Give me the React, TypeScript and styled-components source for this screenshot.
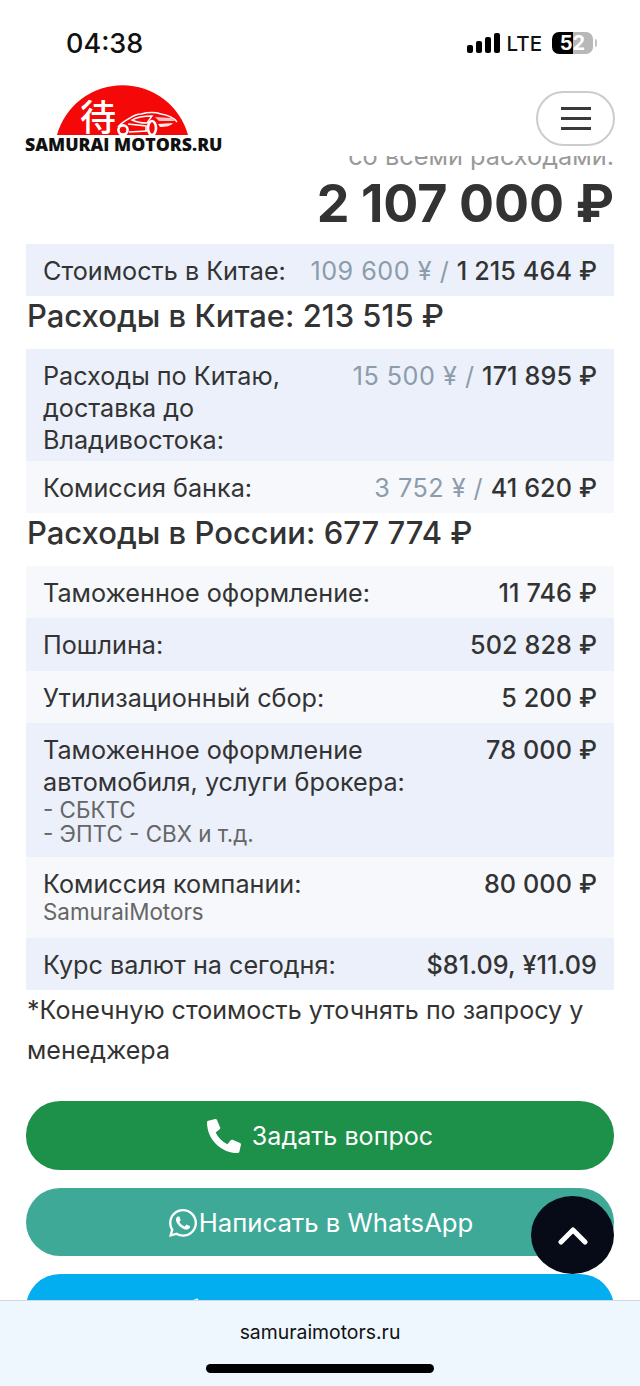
import React from 'react'
import styled, { createGlobalStyle } from 'styled-components'
import { FaPhoneAlt, FaTelegramPlane, FaWhatsapp } from 'react-icons/fa'

const GlobalStyle = createGlobalStyle`
	html, body {
		margin: 0;
		padding: 0;
		background: #fff;
	}
	* {
		box-sizing: border-box;
	}
`

function App() {
	return (
		<Page>
			<GlobalStyle />
			<StatusBar>
				<Time>04:38</Time>
				<StatusIcons>
					<Signal>
						<Bar level={1} />
						<Bar level={2} />
						<Bar level={3} />
						<Bar level={4} />
					</Signal>
					<Lte>LTE</Lte>
					<Battery>
						<BatteryFill>52</BatteryFill>
					</Battery>
				</StatusIcons>
			</StatusBar>
			<Header>
				<Logo>
					<svg width="198" height="50" viewBox="0 0 198 50">
						<path d="M32 50 A68 68 0 0 1 163 50 Z" fill="#f40808" />
						{/* car */}
						<path d="M93 42 C96 38 100 36 105 33 C108 31 111 29 116 29 C124 27 130 27 136 29 C143 30 149 33 152 37" fill="none" stroke="#fff" strokeWidth="1.5" />
						<path d="M107 35 C112 32 119 31 127 31 L122 38 C116 38 111 37 107 35 Z" fill="none" stroke="#fff" strokeWidth="1.4" />
						<path d="M130 32 L146 33 L150 36 L134 36 Z" fill="#fff" opacity="0.75" />
						<path d="M133 39 L148 38 C146 41 141 42 135 42 Z" fill="#fff" opacity="0.9" />
						<path d="M104 47 L122 46 M103 39 L121 41 L121 46" fill="none" stroke="#fff" strokeWidth="1.5" />
						<circle cx="98" cy="45" r="4.6" fill="#f40808" stroke="#fff" strokeWidth="2.6" />
						<ellipse cx="127" cy="43" rx="4" ry="7" fill="#f40808" stroke="#fff" strokeWidth="2.6" />
					</svg>
					<Kanji>待</Kanji>
					<LogoText>SAMURAI MOTORS.RU</LogoText>
				</Logo>
				<MenuButton>
					<MenuLine />
					<MenuLine />
					<MenuLine />
				</MenuButton>
			</Header>
			<Content>
				<Summary>
					<SummaryLabel>со всеми расходами:</SummaryLabel>
					<Total>2 107 000 ₽</Total>
				</Summary>
				<Table>
					<Row tone="blue">
						<Label>Стоимость в Китае:</Label>
						<Value>
							<Muted>109 600 ¥ / </Muted>1 215 464 ₽
						</Value>
					</Row>
				</Table>
				<SectionTitle>Расходы в Китае: 213 515 ₽</SectionTitle>
				<Table>
					<Row tone="blue">
						<Label>
							Расходы по Китаю,
							<br />
							доставка до
							<br />
							Владивостока:
						</Label>
						<Value>
							<Muted>15 500 ¥ / </Muted>171 895 ₽
						</Value>
					</Row>
					<Row tone="light">
						<Label>Комиссия банка:</Label>
						<Value>
							<Muted>3 752 ¥ / </Muted>41 620 ₽
						</Value>
					</Row>
				</Table>
				<SectionTitle>Расходы в России: 677 774 ₽</SectionTitle>
				<Table>
					<Row tone="light">
						<Label>Таможенное оформление:</Label>
						<Value>11 746 ₽</Value>
					</Row>
					<Row tone="blue">
						<Label>Пошлина:</Label>
						<Value>502 828 ₽</Value>
					</Row>
					<Row tone="light">
						<Label>Утилизационный сбор:</Label>
						<Value>5 200 ₽</Value>
					</Row>
					<Row tone="blue">
						<Label>
							Таможенное оформление
							<br />
							автомобиля, услуги брокера:
							<Small bottom={6}>
								- СБКТС
								<br />- ЭПТС - СВХ и т.д.
							</Small>
						</Label>
						<Value>78 000 ₽</Value>
					</Row>
					<Row tone="light">
						<Label>
							Комиссия компании:
							<Small bottom={9}>SamuraiMotors</Small>
						</Label>
						<Value>80 000 ₽</Value>
					</Row>
					<Row tone="blue">
						<Label>Курс валют на сегодня:</Label>
						<Value>$81.09, ¥11.09</Value>
					</Row>
				</Table>
				<Note>*Конечную стоимость уточнять по запросу у менеджера</Note>
				<Buttons>
					<ActionButton color="#1d9049">
						<FaPhoneAlt size={34} />
						<ButtonText gap={11} size={25.1}>Задать вопрос</ButtonText>
					</ActionButton>
					<ActionButton color="#3fa998">
						<FaWhatsapp size={32} />
						<ButtonText gap={0} size={25.7}>Написать в WhatsApp</ButtonText>
					</ActionButton>
					<ActionButton color="#03aef0">
						<FaTelegramPlane size={28} />
						<ButtonText gap={6} size={25.7}>Написать в Telegram</ButtonText>
					</ActionButton>
				</Buttons>
			</Content>
			<ScrollTop>
				<svg width="30" height="20" viewBox="0 0 30 20" fill="none">
					<path d="M3 17 L15 5 L27 17" stroke="#fff" strokeWidth="5" strokeLinecap="round" strokeLinejoin="round" />
				</svg>
			</ScrollTop>
			<BrowserBar>
				<Domain>samuraimotors.ru</Domain>
				<HomeBar />
			</BrowserBar>
		</Page>
	)
}

const Page = styled.div`
	position: relative;
	display: flex;
	flex-direction: column;
	width: 640px;
	height: 1386px;
	overflow: hidden;
	background: #fff;
	color: #333;
	font-family: Inter, 'Liberation Sans', sans-serif;
`

const StatusBar = styled.div`
	flex: none;
	display: flex;
	justify-content: space-between;
	align-items: center;
	height: 84px;
	padding: 2px 47px 0 66px;
	color: #111;
`

const Time = styled.div`
	font-size: 27px;
	font-weight: 500;
`

const StatusIcons = styled.div`
	display: flex;
	align-items: center;
`

const Signal = styled.div`
	display: flex;
	align-items: flex-end;
	gap: 3px;
	height: 20px;
`

const Bar = styled('div')<{ level: number }>`
	width: 6px;
	height: ${(props) => 5 + props.level * 4 - 1}px;
	border-radius: 2px;
	background: #000;
`

const Lte = styled.div`
	margin-left: 7px;
	font-size: 20.5px;
	font-weight: 500;
`

const Battery = styled.div`
	position: relative;
	width: 41px;
	height: 22px;
	margin-left: 10px;
	border-radius: 7px;
	background: linear-gradient(90deg, #000 52%, #b8b8b8 52%);
	&::after {
		content: '';
		position: absolute;
		right: -4px;
		top: 7px;
		width: 2px;
		height: 8px;
		border-radius: 0 2px 2px 0;
		background: #c4c4c4;
	}
`

const BatteryFill = styled.div`
	display: flex;
	justify-content: center;
	align-items: center;
	height: 100%;
	color: #fff;
	font-size: 20px;
	font-weight: 700;
`

const Header = styled.div`
	position: relative;
	z-index: 1;
	flex: none;
	display: flex;
	justify-content: space-between;
	align-items: flex-start;
	height: 72px;
	padding: 0 25px;
	background: #fff;
`

const Logo = styled.div`
	position: relative;
	display: flex;
	flex-direction: column;
	width: 198px;
	height: 70px;
	padding-top: 1px;
	& > svg {
		display: block;
		flex: none;
	}
`

const Kanji = styled.div`
	position: absolute;
	left: 55px;
	top: 13px;
	color: #fff;
	font-family: 'Noto Sans CJK JP', sans-serif;
	font-size: 36px;
	font-weight: 500;
	line-height: 36px;
`

const LogoText = styled.div`
	margin-top: 1px;
	color: #111;
	font-family: 'Open Sans', sans-serif;
	font-size: 17.7px;
	font-weight: 800;
	line-height: 17px;
	white-space: nowrap;
`

const MenuButton = styled.div`
	display: flex;
	flex-direction: column;
	justify-content: center;
	align-items: center;
	gap: 7px;
	width: 79px;
	height: 55px;
	margin-top: 7px;
	border: 2px solid #ccc;
	border-radius: 28px;
`

const MenuLine = styled.div`
	width: 30px;
	height: 3px;
	background: #3a3a3a;
`

const Content = styled.div`
	flex: 1;
	min-height: 0;
	overflow: hidden;
	padding: 0 26px;
`

const Summary = styled.div`
	margin-top: -20px;
	text-align: right;
`

const SummaryLabel = styled.div`
	color: #999;
	font-size: 25.3px;
	line-height: 40px;
`

const Total = styled.div`
	height: 70px;
	margin-top: -2px;
	color: #333;
	font-size: 52px;
	font-weight: 700;
	line-height: 60px;
	word-spacing: -1px;
`

const Table = styled.div`
	display: flex;
	flex-direction: column;
`

const Row = styled('div')<{ tone: 'blue' | 'light' }>`
	display: flex;
	justify-content: space-between;
	align-items: flex-start;
	min-height: 52.3px;
	padding: 11px 17px 5px;
	background: ${(props) => (props.tone === 'blue' ? '#ebf0fa' : '#f6f8fb')};
	font-size: 25.2px;
	line-height: 32px;
`

const Label = styled.div`
	color: #333;
`

const Value = styled.div`
	color: #333;
	font-weight: 500;
	letter-spacing: 0.1px;
	white-space: pre;
`

const Muted = styled.span`
	color: #8c9cab;
	font-weight: 400;
	letter-spacing: 0.5px;
`

const Small = styled('div')<{ bottom: number }>`
	margin-bottom: ${(props) => props.bottom}px;
	color: #666;
	font-size: 22.4px;
	line-height: 24px;
`

const SectionTitle = styled.div`
	height: 52.7px;
	padding-left: 1px;
	color: #333;
	font-size: 31px;
	font-weight: 500;
	line-height: 40px;
`

const Note = styled.div`
	padding-left: 1px;
	color: #333;
	font-size: 25.05px;
	line-height: 40px;
`

const Buttons = styled.div`
	display: flex;
	flex-direction: column;
	gap: 18px;
	margin-top: 31px;
`

const ActionButton = styled('div')<{ color: string }>`
	display: flex;
	justify-content: center;
	align-items: center;
	height: 68.5px;
	padding-top: 2px;
	border-radius: 34px;
	background: ${(props) => props.color};
	color: #fff;
`

const ButtonText = styled('span')<{ gap: number; size: number }>`
	margin-left: ${(props) => props.gap}px;
	font-size: ${(props) => props.size}px;
`

const ScrollTop = styled.div`
	position: absolute;
	left: 531px;
	top: 1196px;
	display: flex;
	justify-content: center;
	align-items: center;
	width: 83px;
	height: 78px;
	border-radius: 50%;
	background: #070b17;
`

const BrowserBar = styled.div`
	flex: none;
	display: flex;
	flex-direction: column;
	align-items: center;
	height: 86px;
	border-top: 1px solid #d4d8dc;
	background: #eef7fd;
`

const Domain = styled.div`
	margin-top: 18px;
	color: #111;
	font-size: 19.4px;
	line-height: 26px;
`

const HomeBar = styled.div`
	width: 228px;
	height: 9px;
	margin-top: 19px;
	border-radius: 5px;
	background: #000;
`

export default App
